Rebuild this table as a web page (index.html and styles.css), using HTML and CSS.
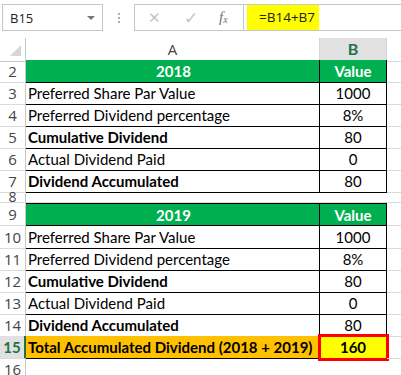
FILE: index.html
```html
<!DOCTYPE html>
<html>
<head>
<meta charset="utf-8">
<link rel="stylesheet" href="styles.css">
</head>
<body>
<div class="fbar">
  <div class="namebox"><span class="ref">B15</span><span class="caret"></span></div>
  <div class="sep"><span></span><span></span><span></span></div>
  <div class="btns">
    <span class="x">✕</span>
    <span class="check">✓</span>
    <span class="fx">f<sub>x</sub></span>
  </div>
  <div class="formula"><span class="hl">=B14+B7</span></div>
</div>

<div class="sheet">
  <div class="r hdr">
    <div class="rh corner"><svg width="12" height="12" viewBox="0 0 12 12"><polygon points="11,0 11,11 0,11" fill="#d6d6d6"/></svg></div>
    <div class="ch">A</div>
    <div class="ch sel">B</div>
    <div class="ch c"></div>
  </div>

  <div class="r first">
    <div class="rh">2</div>
    <div class="a green">2018</div>
    <div class="b green">Value</div>
    <div class="c"></div>
  </div>
  <div class="r">
    <div class="rh">3</div>
    <div class="a">Preferred Share Par Value</div>
    <div class="b">1000</div>
    <div class="c"></div>
  </div>
  <div class="r">
    <div class="rh">4</div>
    <div class="a">Preferred Dividend percentage</div>
    <div class="b">8%</div>
    <div class="c"></div>
  </div>
  <div class="r">
    <div class="rh">5</div>
    <div class="a bold">Cumulative Dividend</div>
    <div class="b">80</div>
    <div class="c"></div>
  </div>
  <div class="r">
    <div class="rh">6</div>
    <div class="a">Actual Dividend Paid</div>
    <div class="b">0</div>
    <div class="c"></div>
  </div>
  <div class="r">
    <div class="rh">7</div>
    <div class="a bold">Dividend Accumulated</div>
    <div class="b">80</div>
    <div class="c"></div>
  </div>

  <div class="r short">
    <div class="rh"><span class="clip8">8</span></div>
    <div class="e"></div>
    <div class="e"></div>
    <div class="c"></div>
  </div>

  <div class="r first topb">
    <div class="rh">9</div>
    <div class="a green">2019</div>
    <div class="b green">Value</div>
    <div class="c"></div>
  </div>
  <div class="r">
    <div class="rh">10</div>
    <div class="a">Preferred Share Par Value</div>
    <div class="b">1000</div>
    <div class="c"></div>
  </div>
  <div class="r">
    <div class="rh">11</div>
    <div class="a">Preferred Dividend percentage</div>
    <div class="b">8%</div>
    <div class="c"></div>
  </div>
  <div class="r">
    <div class="rh">12</div>
    <div class="a bold">Cumulative Dividend</div>
    <div class="b">80</div>
    <div class="c"></div>
  </div>
  <div class="r">
    <div class="rh">13</div>
    <div class="a">Actual Dividend Paid</div>
    <div class="b">0</div>
    <div class="c"></div>
  </div>
  <div class="r">
    <div class="rh">14</div>
    <div class="a bold">Dividend Accumulated</div>
    <div class="b">80</div>
    <div class="c"></div>
  </div>
  <div class="r">
    <div class="rh selr">15</div>
    <div class="a bold orange">Total Accumulated Dividend (2018 + 2019)</div>
    <div class="b bold yellow active">160</div>
    <div class="c"></div>
  </div>
  <div class="r">
    <div class="rh">16</div>
    <div class="e"></div>
    <div class="e"></div>
    <div class="c"></div>
  </div>
</div>
</body>
</html>
```

FILE: styles.css
```css
* { box-sizing: border-box; }
html, body { margin: 0; padding: 0; background: #fff; }
body {
  width: 401px;
  height: 375px;
  overflow: hidden;
  font-family: Lato, "Open Sans", sans-serif;
}

/* formula bar */
.fbar {
  display: flex;
  padding-top: 4px;
  height: 38px;
  align-items: flex-start;
}
.namebox {
  margin-left: 2px;
  width: 101px;
  height: 27px;
  border: 1px solid #c6c6c6;
  display: flex;
  align-items: center;
  justify-content: space-between;
  padding: 0 7px 0 7px;
  font-family: "Open Sans", sans-serif;
  font-size: 13px;
  color: #222;
}
.caret {
  width: 0; height: 0;
  border-left: 4px solid transparent;
  border-right: 4px solid transparent;
  border-top: 4px solid #777;
}
.sep {
  width: 31px;
  height: 27px;
  display: flex;
  flex-direction: column;
  align-items: center;
  justify-content: center;
  gap: 2px;
}
.sep span { width: 2px; height: 2px; background: #b0b0b0; }
.btns {
  width: 109px;
  height: 27px;
  border: 1px solid #c6c6c6;
  border-right: none;
  display: flex;
  align-items: center;
  padding-left: 13px;
}
.btns .x { color: #c4c4c4; font-size: 15px; width: 36px; font-family: "DejaVu Sans", sans-serif; }
.btns .check { color: #c4c4c4; font-size: 17px; width: 35px; font-family: "DejaVu Sans", sans-serif; }
.btns .fx { color: #6f6f6f; font-family: "Liberation Serif", serif; font-style: italic; font-size: 15px; }
.btns .fx sub { font-size: 10px; vertical-align: -1px; }
.formula {
  flex: 1;
  height: 27px;
  border: 1px solid #c6c6c6;
  border-right: none;
  padding-left: 3px;
}
.hl {
  display: inline-block;
  height: 25px;
  background: #ffff00;
  padding: 0 4px 0 12px;
  line-height: 25px;
  font-family: "Open Sans", sans-serif;
  font-size: 13.5px;
  color: #222;
}

/* sheet */
.r {
  display: grid;
  grid-template-columns: 26px 294px 67px 14px;
  height: 22px;
  font-size: 15px;
  line-height: 23px;
  color: #000;
}
.r.short { height: 11px; overflow: hidden; }
.r.short .rh { overflow: hidden; line-height: 11px; }
.clip8 { display: block; height: 10px; line-height: 10px; overflow: hidden; font-size: 14px; }
.r.hdr { height: 22px; }
.rh {
  border-right: 1px solid #c8c8c8;
  border-bottom: 1px solid #dadada;
  color: #444;
  text-align: center;
  font-family: "Open Sans", sans-serif;
  font-size: 15px;
  line-height: 22px;
}
.corner { display: flex; align-items: flex-end; justify-content: flex-end; padding: 0 3px 4px 0; border-bottom: 1px solid #c8c8c8; }
.ch {
  border-right: 1px solid #d4d4d4;
  border-bottom: 1px solid #c8c8c8;
  text-align: center;
  color: #444;
  font-family: "Open Sans", sans-serif;
  font-size: 15px;
  line-height: 22px;
}
.ch.sel {
  background: #e1e1e1;
  color: #217346;
  font-weight: bold;
  border-bottom: 2px solid #217346;
  font-family: Lato, sans-serif;
  font-size: 16px;
}
.ch.c { border-right: none; }
.c { border-bottom: 1px solid #dadada; }
.e { border-bottom: 1px solid #dadada; }

.a, .b {
  border-right: 1px solid #000;
  border-bottom: 1px solid #000;
  white-space: nowrap;
  overflow: hidden;
}
.a { padding-left: 2px; }
.b { text-align: center; }
.bold { font-weight: bold; }
.green { background: #00b050; color: #fff; font-weight: bold; }
.a.green { text-align: center; }
.topb .a, .topb .b { border-top: 1px solid #000; }
.r.topb { height: 23px; }
.orange { background: #ffc000; }
.yellow { background: #ffff00; }
.active { outline: 3px solid #ff0000; outline-offset: -1px; }
.selr {
  background: #e1e1e1;
  color: #217346;
  font-weight: bold;
  border-right: 2px solid #217346;
  font-family: Lato, sans-serif;
}
```
